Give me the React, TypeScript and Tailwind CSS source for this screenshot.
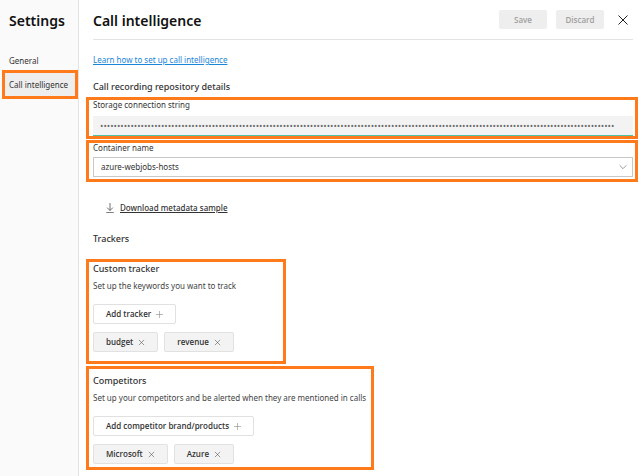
import type { ReactNode } from "react";

function Icon({ d, className }: { d: string; className: string }) {
  return (
    <svg viewBox="0 0 12 12" fill="none" stroke="currentColor" aria-hidden="true" className={className}>
      <path d={d} />
    </svg>
  );
}

const CROSS = "M1.5 1.5l9 9M10.5 1.5l-9 9";
const PLUS = "M6 0v12M0 6h12";

function Highlight({ className = "", children }: { className?: string; children: ReactNode }) {
  return <div className={`border-3 border-[#ff7a1a] pl-1 ${className}`}>{children}</div>;
}

function Chip({ label }: { label: string }) {
  return (
    <button
      type="button"
      aria-label={`Remove ${label}`}
      className="flex h-5 items-center gap-[5px] rounded-xs border border-[#e1e1e1] bg-[#f3f3f3] px-3 font-['Open_Sans',sans-serif] text-[8px] font-semibold"
    >
      {label}
      <Icon d={CROSS} className="size-[7px] text-[#555]" />
    </button>
  );
}

type TrackerProps = { title: string; text: string; action: string; chips: string[]; className: string };

function Tracker({ title, text, action, chips, className }: TrackerProps) {
  return (
    <Highlight className={className}>
      <h3 className="text-[9px] leading-[14px] font-medium">{title}</h3>
      <p className="mt-1 text-[8px] leading-3 whitespace-nowrap text-[#444]">{text}</p>
      <button
        type="button"
        className="mt-3 flex h-5 items-center gap-[5px] rounded-xs border border-[#e1e1e1] bg-white px-3 font-['Open_Sans',sans-serif] text-[8px] font-semibold"
      >
        {action}
        <Icon d={PLUS} className="size-[7px] text-[#888]" />
      </button>
      <div className="mt-2 flex gap-1.5">
        {chips.map((chip) => (
          <Chip key={chip} label={chip} />
        ))}
      </div>
    </Highlight>
  );
}

export default function App() {
  return (
    <div className="flex min-h-screen bg-white font-['Noto_Sans','Open_Sans',sans-serif] text-[#333]">
      <aside className="w-[79px] shrink-0 border-r border-[#e3e3e3] bg-[#fafafa]">
        <h2 className="pt-[11px] pl-[9px] text-[14px] leading-5 font-semibold text-[#111]">Settings</h2>
        <nav className="mt-[22px] pl-0.5 text-[8px] text-[#333]">
          <a href="#general" className="block pl-[7px] leading-4">General</a>
          <a
            href="#call-intelligence"
            aria-current="page"
            className="mt-px flex h-[29px] items-center border-3 border-[#ff7a1a] bg-[#eee] pl-1 whitespace-nowrap"
          >
            Call intelligence
          </a>
        </nav>
      </aside>

      <main className="min-w-0 flex-1 pr-1.5 pl-[7px]">
        <header className="mr-[5px] ml-[7px] flex h-10 items-center border-b border-[#e3e3e3]">
          <h1 className="flex-1 pt-0.5 text-[14px] leading-5 font-semibold text-[#111]">Call intelligence</h1>
          <div className="flex items-center gap-[9px] font-['Open_Sans',sans-serif] text-[8px] font-semibold text-[#a0a0a0]">
            <button type="button" disabled className="h-[19px] w-12 rounded-xs bg-[#eee]">Save</button>
            <button type="button" disabled className="h-[19px] w-12 rounded-xs bg-[#eee]">Discard</button>
            <button type="button" aria-label="Close" className="ml-1 pr-1 text-[#222]">
              <Icon d={CROSS} className="size-3" />
            </button>
          </div>
        </header>

        <div className="mt-3 pl-[7px] text-[8px] leading-4">
          <a href="#learn" className="text-[#1a86d9] underline">Learn how to set up call intelligence</a>
        </div>
        <h2 className="mt-[11px] pl-[7px] text-[9px] leading-4 font-medium">Call recording repository details</h2>

        <Highlight className="mt-0.5 pr-0.5">
          <label htmlFor="storage" className="block text-[8px] leading-[10px]">Storage connection string</label>
          <input
            id="storage"
            type="password"
            defaultValue={"x".repeat(152)}
            className="mt-1.5 block h-5 w-full border-b border-[#4fc3a1] bg-[#f3f3f3] pr-[18px] pl-[7px] font-['Open_Sans',sans-serif] text-[9px] text-[#666] outline-none"
          />
        </Highlight>
        <Highlight className="mt-px pr-0.5 pb-0.5">
          <label htmlFor="container" className="block text-[8px] leading-[10px]">Container name</label>
          <div className="relative mt-1">
            <select
              id="container"
              className="block h-5 w-full appearance-none border border-[#c8c8c8] bg-white pl-[7px] text-[8px]"
            >
              <option>azure-webjobs-hosts</option>
            </select>
            <Icon
              d="M1 3.5l5 5 5-5"
              className="pointer-events-none absolute top-1.5 right-1.5 size-2 text-[#666]"
            />
          </div>
        </Highlight>

        <div className="mt-[18px] flex items-center gap-[5px] pl-[19px] text-[8px] leading-4 font-medium">
          <Icon d="M6 0v9M2.5 5.5L6 9l3.5-3.5M1.5 11.5h9" className="size-2.5 text-[#555]" />
          <a href="#metadata" className="underline">Download metadata sample</a>
        </div>

        <h2 className="mt-[15px] pl-[7px] text-[9px] leading-4 font-medium">Trackers</h2>
        <Tracker
          title="Custom tracker"
          text="Set up the keywords you want to track"
          action="Add tracker"
          chips={["budget", "revenue"]}
          className="mt-3 w-[200px] pb-[9px]"
        />
        <Tracker
          title="Competitors"
          text="Set up your competitors and be alerted when they are mentioned in calls"
          action="Add competitor brand/products"
          chips={["Microsoft", "Azure"]}
          className="mt-0.5 w-[288px] pt-[5px] pb-[3px]"
        />
      </main>
    </div>
  );
}
